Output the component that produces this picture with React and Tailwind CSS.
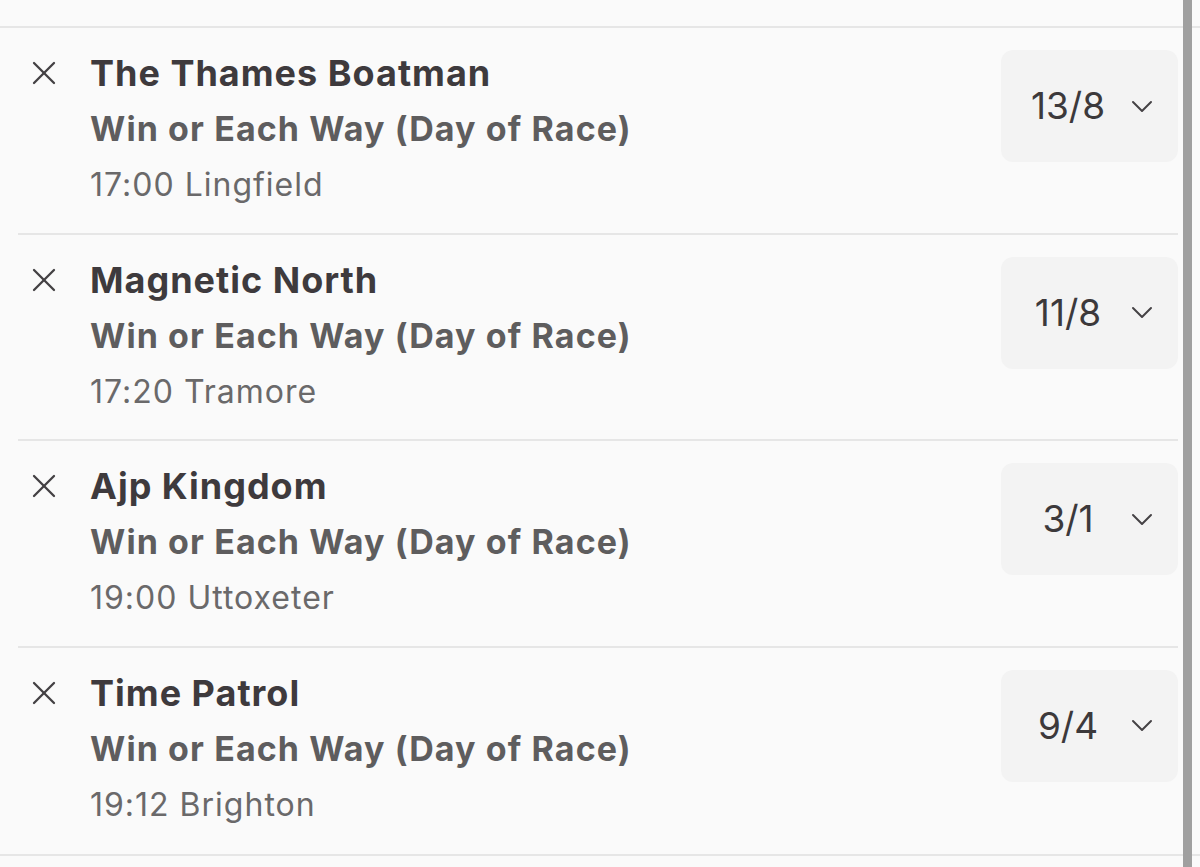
import React from "react";

const bets = [
  { name: "The Thames Boatman", market: "Win or Each Way (Day of Race)", race: "17:00 Lingfield", odds: "13/8" },
  { name: "Magnetic North", market: "Win or Each Way (Day of Race)", race: "17:20 Tramore", odds: "11/8" },
  { name: "Ajp Kingdom", market: "Win or Each Way (Day of Race)", race: "19:00 Uttoxeter", odds: "3/1" },
  { name: "Time Patrol", market: "Win or Each Way (Day of Race)", race: "19:12 Brighton", odds: "9/4" },
];

function CloseIcon() {
  return (
    <svg width="24" height="24" viewBox="0 0 24 24" fill="none" stroke="#434043" strokeWidth="2.3" strokeLinecap="round">
      <line x1="2" y1="2" x2="22" y2="22" />
      <line x1="22" y1="2" x2="2" y2="22" />
    </svg>
  );
}

function Chevron() {
  return (
    <svg width="22" height="13" viewBox="0 0 22 13" fill="none" stroke="#454245" strokeWidth="2" strokeLinecap="round" strokeLinejoin="round">
      <polyline points="2,2 11,11 20,2" />
    </svg>
  );
}

function BetRow({ bet, last }) {
  return (
    <div
      className={[
        "flex h-[206.5px] ml-[18px] w-[1160px]",
        last ? "" : "border-b-2 border-[#e6e6e6]",
      ].join(" ")}
    >
      {/* remove */}
      <div className="w-[72px] shrink-0 pt-[17px]">
        <div className="flex h-[56px] items-center pl-[14px]">
          <CloseIcon />
        </div>
      </div>

      {/* selection */}
      <div className="flex-1 pt-[17px] leading-[56px]">
        <p className="text-[36px] font-bold tracking-[1px] text-[#3e3a3d]">{bet.name}</p>
        <p className="text-[34px] font-bold tracking-[1.1px] text-[#5e5d5e]">{bet.market}</p>
        <p className="text-[32px] tracking-[1px] text-[#6a696a]">{bet.race}</p>
      </div>

      {/* odds */}
      <div className="mt-[22px] flex h-[112px] w-[177px] shrink-0 items-center rounded-xl bg-[#f3f3f3] pl-[20px]">
        <span className="w-[94px] text-center text-[37px] text-[#3c393b]">{bet.odds}</span>
        <span className="ml-[16px] flex">
          <Chevron />
        </span>
      </div>
    </div>
  );
}

export default function App() {
  return (
    <div
      className="relative h-[867px] w-[1200px] overflow-hidden bg-[#fafafa]"
      style={{ fontFamily: "Inter, 'Noto Sans', sans-serif" }}
    >
      <div className="box-content h-[26px] border-b-2 border-[#e6e6e6]" />
      {bets.map((b, i) => (
        <BetRow key={b.name} bet={b} last={i === bets.length - 1} />
      ))}
      <div className="border-b-2 border-[#e6e6e6]" />

      {/* scrollbar */}
      <div className="absolute right-[8px] top-0 h-full w-[9px] bg-[#a0a0a0]" />
    </div>
  );
}
